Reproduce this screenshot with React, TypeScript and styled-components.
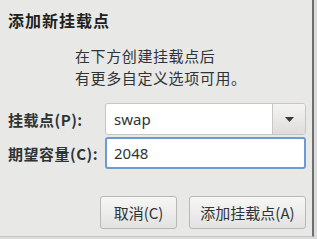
import styled, { createGlobalStyle } from 'styled-components';

const GlobalStyle = createGlobalStyle`
  html, body {
    margin: 0;
    padding: 0;
    background: #dcdcdc;
  }
  body {
    font-family: 'Noto Sans CJK SC', 'Noto Sans', sans-serif;
    color: #2e3436;
  }
`;

const Dialog = styled.div`
  width: 314px;
  height: 237px;
  box-sizing: border-box;
  background: #e8e8e7;
  border-right: 2px solid #6f6f6f;
  border-bottom: 1px solid #c4c4c4;
  padding: 8px 6px 0 8px;
  display: flex;
  flex-direction: column;
`;

const Title = styled.div`
  font-size: 16px;
  font-weight: bold;
  line-height: 24px;
  letter-spacing: 1px;
  color: #1f1f1f;
`;

const Hint = styled.div`
  margin: 13px 0 0 67px;
  font-size: 15px;
  line-height: 22px;
  letter-spacing: 0.6px;
  color: #2e3436;
`;

const Form = styled.div`
  margin-top: 14px;
  display: grid;
  grid-template-columns: 97px 1fr;
  grid-auto-rows: 32px;
  row-gap: 2px;
  align-items: center;
`;

const Label = styled.label`
  font-size: 15px;
  font-weight: bold;
  letter-spacing: 0.5px;
  white-space: nowrap;
  color: #2e3436;
`;

const Combo = styled.div`
  height: 32px;
  display: flex;
  box-sizing: border-box;
  border: 1px solid #c6c6c4;
  border-radius: 3px;
  overflow: hidden;
  background: #fff;
`;

const ComboText = styled.div`
  flex: 1;
  padding-left: 8px;
  display: flex;
  align-items: center;
  font-family: 'Noto Sans', sans-serif;
  font-size: 15px;
  color: #2e3436;
`;

const ComboButton = styled.div`
  width: 32px;
  border-left: 1px solid #c6c6c4;
  background: linear-gradient(#f4f4f3, #dedddb);
  display: flex;
  align-items: center;
  justify-content: center;
`;

const Entry = styled.div`
  height: 32px;
  box-sizing: border-box;
  border: 2px solid #6b9bd0;
  border-radius: 3px;
  background: #fff;
  padding-left: 7px;
  display: flex;
  align-items: center;
  font-family: 'Noto Sans', sans-serif;
  font-size: 15px;
  color: #2e3436;
`;

const Actions = styled.div`
  margin-top: 27px;
  display: flex;
  justify-content: flex-end;
  gap: 12px;
`;

const Button = styled.button<{ $wide?: boolean }>`
  width: ${(p) => (p.$wide ? '117px' : '77px')};
  height: 33px;
  border: 1px solid #b8b8b6;
  border-radius: 3px;
  background: linear-gradient(#f7f7f6, #e2e2e0);
  font-family: 'Noto Sans CJK SC', 'Noto Sans', sans-serif;
  font-size: 15px;
  color: #2e3436;
  padding: 0;
`;

export default function App() {
  return (
    <>
      <GlobalStyle />
      <Dialog>
        <Title>添加新挂载点</Title>
        <Hint>
          在下方创建挂载点后
          <br />
          有更多自定义选项可用。
        </Hint>
        <Form>
          <Label>挂载点(P):</Label>
          <Combo>
            <ComboText>swap</ComboText>
            <ComboButton>
              <svg width="9" height="5" viewBox="0 0 9 5">
                <path d="M0 0h9L4.5 5z" fill="#3a3a3a" />
              </svg>
            </ComboButton>
          </Combo>
          <Label>期望容量(C):</Label>
          <Entry>2048</Entry>
        </Form>
        <Actions>
          <Button>取消(C)</Button>
          <Button $wide>添加挂载点(A)</Button>
        </Actions>
      </Dialog>
    </>
  );
}
